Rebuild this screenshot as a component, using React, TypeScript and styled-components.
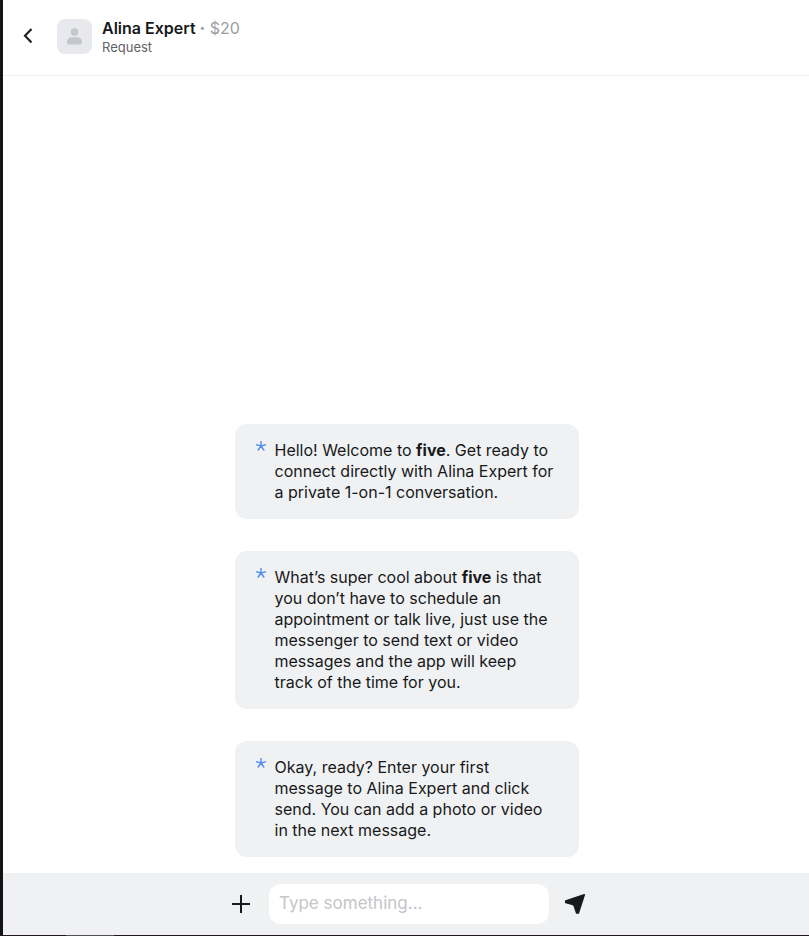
import React from "react";
import styled, { createGlobalStyle } from "styled-components";

const GlobalStyle = createGlobalStyle`
  *, *::before, *::after { box-sizing: border-box; }
  body {
    margin: 0;
    background: #ffffff;
    color: #17191a;
    font-family: Inter, "Liberation Sans", sans-serif;
  }
  button, input { font: inherit; color: inherit; }
`;

const Page = styled.div`
  display: flex;
  flex-direction: column;
  min-height: 100vh;
  border-left: 3px solid #141414;
`;

const Header = styled.header`
  display: flex;
  align-items: center;
  height: 76px;
  padding: 0 16px 2px;
  border-bottom: 1px solid #eff0f2;
`;

const IconButton = styled.button`
  display: flex;
  align-items: center;
  justify-content: center;
  width: 24px;
  height: 24px;
  padding: 0;
  border: 0;
  background: none;
  cursor: pointer;
`;

const BackButton = styled(IconButton)`
  width: 18px;
  margin-right: 20px;
`;

const Avatar = styled.div`
  width: 35px;
  height: 35px;
  margin-right: 10px;
  border-radius: 8px;
  background: #e8e9ed;
`;

const Title = styled.h1`
  margin: 0;
  font-size: 16px;
  line-height: 20px;
  font-weight: 600;
`;

const Price = styled.span`
  font-weight: 400;
  color: #9a9da1;
`;

const Dot = styled.span`
  font-weight: 800;
`;

const Status = styled.p`
  margin: 0;
  font-size: 13px;
  line-height: 18px;
  color: #606366;
`;

const Messages = styled.main`
  display: flex;
  flex: 1;
  flex-direction: column;
  align-items: center;
  justify-content: flex-end;
  gap: 32px;
  padding: 16px 15px 16px 16px;
`;

const Message = styled.article`
  display: flex;
  gap: 8px;
  width: 100%;
  max-width: 344px;
  padding: 16px 20px;
  border-radius: 12px;
  background: #f0f1f3;
`;

const Star = styled.svg`
  flex: none;
  width: 12px;
  height: 12px;
`;

const MessageText = styled.p`
  margin: 0;
  font-size: 16px;
  line-height: 21px;
  font-weight: 400;

  strong { font-weight: 700; }
`;

const Composer = styled.form`
  display: flex;
  align-items: center;
  justify-content: center;
  gap: 14px;
  height: 62px;
  padding: 0 16px 0 22px;
  background: #f0f1f3;
`;

const TextField = styled.input`
  flex: 0 1 280px;
  min-width: 0;
  height: 40px;
  padding: 0 10px 2px;
  border: 0;
  border-radius: 12px;
  outline: none;
  background: #ffffff;
  font-size: 17px;
  &::placeholder { color: #c3c6ca; opacity: 1; }
`;

const BottomEdge = styled.footer`
  height: 1px;
  margin-left: -3px;
  padding-left: 66px;
  background: #20171c;

  &::before {
    content: "";
    display: block;
    width: 48px;
    height: 1px;
    background: #554e52;
  }
`;

function SystemMessage({ children }: { children: React.ReactNode }) {
  return (
    <Message>
      <Star viewBox="0 0 12 12" fill="none" stroke="#4f8df5" strokeWidth="1.4" aria-hidden="true">
        <path d="M6 1v5M1 4.6 6 6l5-1.4M6 6l-3.200 4.500M6 6l3.200 4.500" />
      </Star>
      <MessageText>{children}</MessageText>
    </Message>
  );
}

export default function App() {
  return (
    <>
      <GlobalStyle />
      <Page>
        <Header>
          <BackButton type="button" aria-label="Back">
            <svg width="18" height="24" viewBox="0 0 18 24" fill="none" stroke="#222425" strokeWidth="2.200">
              <path d="m12.500 4-6.500 6.700 6.500 6.700" />
            </svg>
          </BackButton>
          <Avatar>
            <svg width="35" height="35" viewBox="0 0 35 35" fill="#c4c7cb" aria-hidden="true">
              <circle cx="17.5" cy="13" r="3.800" />
              <path d="M10 23.2c0-3 2.1-4.9 5-4.9h5c2.900 0 5 1.900 5 4.900 0 1.500-.9 2.300-2.300 2.300H12.300c-1.400 0-2.300-.8-2.300-2.300Z" />
            </svg>
          </Avatar>
          <div>
            <Title>Alina Expert <Price><Dot>·</Dot> $20</Price></Title>
            <Status>Request</Status>
          </div>
        </Header>
        <Messages>
          <SystemMessage>
            Hello! Welcome to <strong>five</strong>. Get ready to connect directly with Alina Expert for a private 1-on-1 conversation.
          </SystemMessage>
          <SystemMessage>
            What’s super cool about <strong>five</strong> is that you don’t have to schedule an appointment or talk live, just use the messenger to send text or video messages and the app will keep track of the time for you.
          </SystemMessage>
          <SystemMessage>
            Okay, ready? Enter your first message to Alina Expert and click send. You can add a photo or video in the next message.
          </SystemMessage>
        </Messages>
        <Composer onSubmit={(event) => event.preventDefault()}>
          <IconButton type="button" aria-label="Add attachment">
            <svg width="24" height="24" viewBox="0 0 24 24" fill="none" stroke="#17191a" strokeWidth="2">
              <path d="M10 3v18M1 12h18" />
            </svg>
          </IconButton>
          <TextField type="text" aria-label="Message" placeholder="Type something..." />
          <IconButton type="submit" aria-label="Send">
            <svg width="24" height="24" viewBox="0 0 24 24" fill="#17191a" stroke="#17191a" strokeWidth="1.500" strokeLinejoin="round">
              <path d="M21.300 2.700 15.400 21h-1.800l-2.400-7.200-1.200-1.200L2.700 10.500V8.900Z" />
            </svg>
          </IconButton>
        </Composer>
        <BottomEdge />
      </Page>
    </>
  );
}
